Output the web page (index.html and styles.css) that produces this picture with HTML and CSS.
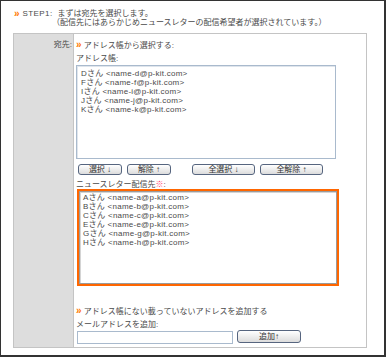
FILE: index.html
```html
<!DOCTYPE html>
<html lang="ja">
<head>
    <meta charset="UTF-8">
    <meta name="viewport" content="width=device-width, initial-scale=1.0">
    <title>STEP1 宛先選択</title>
    <link rel="stylesheet" href="styles.css">
</head>
<body>
    <div class="frame">
        <div class="step">
            <div class="step-line">
                <span class="mark">&raquo;</span><span class="step-no">STEP1:</span><span>まずは宛先を選択します。</span>
            </div>
            <div class="step-note">（配信先にはあらかじめニュースレターの配信希望者が選択されています。）</div>
        </div>

        <div class="form-table">
            <div class="label-cell">宛先:</div>
            <div class="field-cell">
                <div class="section-title"><span class="mark">&raquo;</span> アドレス帳から選択する:</div>
                <div class="field-label">アドレス帳:</div>
                <div class="listbox book">
                    <div>Dさん &lt;name-d@p-kit.com&gt;</div>
                    <div>Fさん &lt;name-f@p-kit.com&gt;</div>
                    <div>Iさん &lt;name-i@p-kit.com&gt;</div>
                    <div>Jさん &lt;name-j@p-kit.com&gt;</div>
                    <div>Kさん &lt;name-k@p-kit.com&gt;</div>
                </div>
                <div class="btn-row">
                    <button class="btn btn-sm">選択 ↓</button>
                    <button class="btn btn-sm">解除 ↑</button>
                    <button class="btn btn-lg btn-gap">全選択 ↓</button>
                    <button class="btn btn-lg">全解除 ↑</button>
                </div>
                <div class="field-label dest-label">ニュースレター配信先<span class="req">※</span>:</div>
                <div class="dest-wrap">
                    <div class="listbox dest">
                        <div>Aさん &lt;name-a@p-kit.com&gt;</div>
                        <div>Bさん &lt;name-b@p-kit.com&gt;</div>
                        <div>Cさん &lt;name-c@p-kit.com&gt;</div>
                        <div>Eさん &lt;name-e@p-kit.com&gt;</div>
                        <div>Gさん &lt;name-g@p-kit.com&gt;</div>
                        <div>Hさん &lt;name-h@p-kit.com&gt;</div>
                    </div>
                </div>
                <div class="section-title add-title"><span class="mark">&raquo;</span> アドレス帳にない載っていないアドレスを追加する</div>
                <div class="field-label">メールアドレスを追加:</div>
                <div class="add-row">
                    <input type="text" class="mail-input">
                    <button class="btn btn-add">追加↑</button>
                </div>
            </div>
        </div>
    </div>
</body>
</html>
```

FILE: styles.css
```css
* {
    box-sizing: border-box;
}

body {
    margin: 0;
    background-color: #fff;
    font-family: "Liberation Sans", "Noto Sans CJK JP", sans-serif;
    font-size: 8px;
    line-height: 9px;
    color: #4a4a4a;
}

.frame {
    width: 386px;
    height: 357px;
    border: 1px solid #333;
    border-right-width: 2px;
    border-bottom-width: 2px;
    padding-top: 8px;
}

.mark {
    color: #f70;
    font-size: 10px;
    font-weight: bold;
    line-height: 9px;
}

/* step header */
.step {
    padding-left: 13px;
}

.step-line {
    display: flex;
}

.step-no {
    margin-left: 3px;
    width: 35px;
    letter-spacing: 0.4px;
}

.step-note {
    padding-left: 38px;
}

/* form table */
.form-table {
    display: grid;
    grid-template-columns: 60px 1fr;
    margin: 6px 17px 0 12px;
    height: 315px;
    border: 1px solid #c4c4c4;
}

.label-cell {
    background-color: #dddddd;
    border-right: 1px solid #c4c4c4;
    text-align: right;
    padding: 6px 1px 0 0;
}

.field-cell {
    padding: 6px 0 0 2px;
}

.field-label {
    margin-top: 4px;
}

.listbox {
    background-color: #fff;
    padding: 3px 0 0 4px;
    letter-spacing: 0.25px;
}

.book {
    margin-top: 2px;
    width: 260px;
    height: 94px;
    border: 1px solid #a9bacd;
    box-shadow: inset 1px 1px 0 #dfe5ec;
}

.btn-row {
    display: flex;
    gap: 5px;
    margin: 5px 0 0 2px;
}

.btn {
    height: 11px;
    padding: 0;
    font-family: inherit;
    font-size: 8px;
    line-height: 9px;
    color: #333;
    border: 1px solid #56657f;
    border-radius: 3px;
    background: linear-gradient(#ffffff, #dcdcdc);
    cursor: pointer;
}

.btn-sm {
    width: 44px;
}

.btn-lg {
    width: 63px;
}

.btn-gap {
    margin-left: 16px;
}

.dest-label {
    margin-top: 6px;
    line-height: 8px;
}

.req {
    color: #f36;
}

.dest-wrap {
    margin-left: 1px;
    width: 262px;
    height: 97px;
    border: 2px solid #f60;
}

.dest {
    height: 100%;
    border: 1px solid #9a9a9a;
    box-shadow: inset 1px 1px 0 #d4d4d4;
    padding: 1px 0 0 3px;
}

.add-title {
    margin-top: 20px;
}

.add-row {
    display: flex;
    align-items: flex-start;
    gap: 4px;
    margin: 1px 0 0 1px;
}

.mail-input {
    width: 156px;
    height: 13px;
    margin: 1px 0 0;
    padding: 0 2px;
    border: 1px solid #a9bacd;
    font-family: inherit;
    font-size: 8px;
}

.btn-add {
    width: 64px;
    height: 13px;
}
```
